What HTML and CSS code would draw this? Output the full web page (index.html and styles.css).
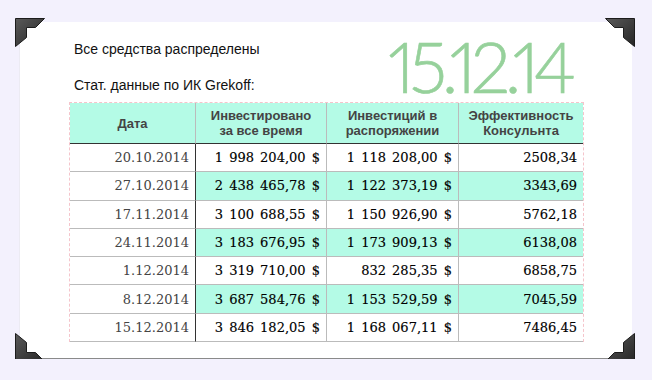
FILE: index.html
```html
<!DOCTYPE html>
<html lang="ru">
<head>
<meta charset="utf-8">
<link rel="stylesheet" href="styles.css">
</head>
<body>
<div class="card">
  <svg class="corner tl" width="30" height="29" viewBox="0 0 30 29"><defs><linearGradient id="g1" x1="0" y1="0" x2="1" y2="1"><stop offset="0" stop-color="#5a5a5a"/><stop offset="1" stop-color="#262626"/></linearGradient></defs><path d="M0.5,0.5 H29.5 L20.5,9.5 H11.5 V19.5 L0.5,28.5 Z" fill="url(#g1)" stroke="#1c1c1c"/></svg>
  <svg class="corner tr" width="30" height="29" viewBox="0 0 30 29"><path d="M29.5,0.5 H0.5 L9.5,9.5 H18.5 V19.5 L29.5,28.5 Z" fill="url(#g1)" stroke="#1c1c1c"/></svg>
  <svg class="corner bl" width="30" height="29" viewBox="0 0 30 29"><path d="M0.5,28.5 H29.5 L20.5,19.5 H11.5 V9.5 L0.5,0.5 Z" fill="url(#g1)" stroke="#1c1c1c"/></svg>
  <svg class="corner br" width="30" height="29" viewBox="0 0 30 29"><path d="M29.5,28.5 H0.5 L9.5,19.5 H18.5 V9.5 L29.5,0.5 Z" fill="url(#g1)" stroke="#1c1c1c"/></svg>

  <div class="top">
    <div class="titles">
      <p class="t1">Все средства распределены</p>
      <p class="t2">Стат. данные по ИК Grekoff:</p>
    </div>
    <div class="bigdate">15.12.14</div>
  </div>

  <table class="stats">
    <colgroup><col class="c1"><col class="c2"><col class="c3"><col class="c4"></colgroup>
    <thead>
      <tr><th>Дата</th><th>Инвестировано<br>за все время</th><th>Инвестиций в<br>распоряжении</th><th>Эффективность<br>Консульнта</th></tr>
    </thead>
    <tbody>
      <tr><td class="d">20.10.2014</td><td class="m">1 998 204,00 $</td><td class="m">1 118 208,00 $</td><td class="m">2508,34</td></tr>
      <tr class="alt"><td class="d">27.10.2014</td><td class="m">2 438 465,78 $</td><td class="m">1 122 373,19 $</td><td class="m">3343,69</td></tr>
      <tr><td class="d">17.11.2014</td><td class="m">3 100 688,55 $</td><td class="m">1 150 926,90 $</td><td class="m">5762,18</td></tr>
      <tr class="alt"><td class="d">24.11.2014</td><td class="m">3 183 676,95 $</td><td class="m">1 173 909,13 $</td><td class="m">6138,08</td></tr>
      <tr><td class="d">1.12.2014</td><td class="m">3 319 710,00 $</td><td class="m">832 285,35 $</td><td class="m">6858,75</td></tr>
      <tr class="alt"><td class="d">8.12.2014</td><td class="m">3 687 584,76 $</td><td class="m">1 153 529,59 $</td><td class="m">7045,59</td></tr>
      <tr><td class="d">15.12.2014</td><td class="m">3 846 182,05 $</td><td class="m">1 168 067,11 $</td><td class="m">7486,45</td></tr>
    </tbody>
  </table>
</div>
</body>
</html>
```
FILE: styles.css
```css
html, body {
  margin: 0;
  padding: 0;
  background: #f3f1fd;
}
body {
  padding: 22px 20px 0 20px;
  font-family: "Liberation Sans", Arial, sans-serif;
}
.card {
  position: relative;
  width: 612px;
  height: 336px;
  background: #fff;
  border-bottom: 1px solid #8a8a8a;
  box-shadow: -1px 0 0 #ecebf3;
}
.corner {
  position: absolute;
  display: block;
}
.corner.tl { left: -5px; top: -4px; }
.corner.tr { right: -3px; top: -4px; }
.corner.bl { left: -5px; bottom: -4px; }
.corner.br { right: -3px; bottom: -4px; }

.top {
  display: flex;
  height: 80px;
  padding-left: 54px;
}
.titles {
  width: 314px;
  padding-top: 19px;
}
.titles p {
  margin: 0;
  font-size: 14px;
  line-height: 16px;
  color: #111;
}
.titles .t2 {
  margin-top: 20px;
}
.bigdate {
  padding-top: 8px;
  font-family: "Lato", sans-serif;
  font-weight: 300;
  font-size: 71px;
  line-height: 71px;
  color: #96d19b;
  letter-spacing: -5.5px;
  -webkit-text-stroke: 0.6px #96d19b;
  font-variant-numeric: proportional-nums;
  white-space: nowrap;
}

.stats {
  margin-left: 49px;
  width: 515px;
  table-layout: fixed;
  border-collapse: separate;
  border-spacing: 0;
  border-top: 1px dashed #f5c4cb;
  border-left: 1px dashed #f5c4cb;
  border-right: 1px dashed #f5c4cb;
}
.c1 { width: 125px; }
.c2 { width: 131px; }
.c3 { width: 132px; }
.c4 { width: 125px; }

.stats th {
  height: 40px;
  padding: 0;
  background: #b4fbe6;
  border-bottom: 1px solid #333;
  font-family: "Liberation Sans", Arial, sans-serif;
  font-weight: bold;
  font-size: 13px;
  line-height: 15px;
  color: #444;
  text-align: center;
  vertical-align: middle;
}
.stats th + th {
  border-left: 1px solid #bbb;
}
.stats td {
  height: 27.3px;
  padding: 0 6px 0 0;
  border-bottom: 1px solid #bbb;
  font-family: "DejaVu Serif", Georgia, serif;
  font-size: 13px;
  text-align: right;
  white-space: nowrap;
  vertical-align: middle;
}
.stats td + td {
  border-left: 1px solid #bbb;
}
.stats td.d {
  color: #444;
}
.stats td.m {
  color: #000;
  word-spacing: 2px;
  -webkit-text-stroke: 0.15px #000;
}
.stats td.d + td {
  border-left-color: #333;
}
.stats tr.alt td.m {
  background: #b4fbe6;
}
```
